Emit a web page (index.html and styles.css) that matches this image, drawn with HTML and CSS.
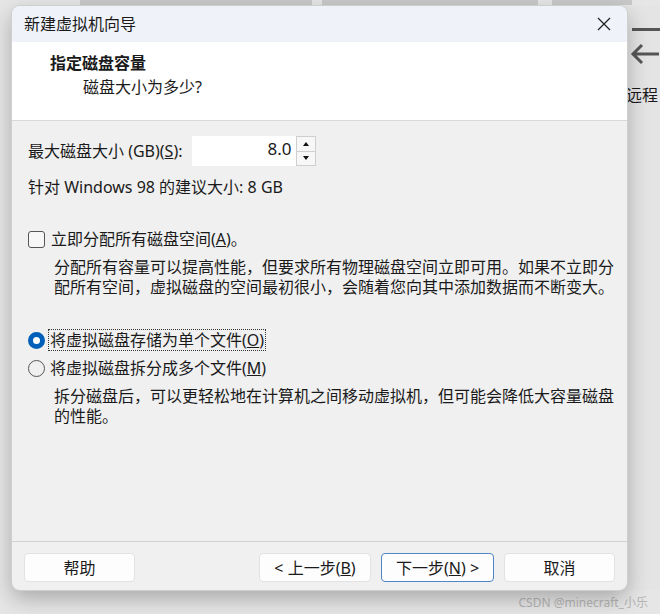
FILE: index.html
```html
<!DOCTYPE html>
<html lang="zh-CN">
<head>
  <meta charset="UTF-8">
  <title>新建虚拟机向导</title>
  <link rel="stylesheet" href="styles.css">
</head>
<body>

  <!-- windows behind the dialog -->
  <div class="top-strip">
    <span class="strip strip-a"></span>
    <span class="strip strip-b"></span>
    <span class="strip strip-c"></span>
  </div>

  <div class="stage">
    <div class="dialog">
      <div class="titlebar">
        <span>新建虚拟机向导</span>
        <svg class="close" width="14" height="14" viewBox="0 0 14 14">
          <path d="M1 1 L13 13 M13 1 L1 13" stroke="#222" stroke-width="1.3" fill="none"/>
        </svg>
      </div>

      <div class="header">
        <div class="header-title">指定磁盘容量</div>
        <div class="header-sub">磁盘大小为多少?</div>
      </div>

      <div class="content">
        <div class="size-row">
          <label>最大磁盘大小 (GB)(<u>S</u>):</label>
          <div class="spin">
            <div class="spin-value">8.0</div>
            <div class="spin-btns">
              <div class="spin-btn"><span class="tri-up"></span></div>
              <div class="spin-btn"><span class="tri-down"></span></div>
            </div>
          </div>
        </div>
        <div class="hint">针对 Windows 98 的建议大小: 8 GB</div>

        <div class="check-row">
          <span class="checkbox"></span>
          <span>立即分配所有磁盘空间(<u>A</u>)。</span>
        </div>
        <p class="desc">分配所有容量可以提高性能，但要求所有物理磁盘空间立即可用。如果不立即分配所有空间，虚拟磁盘的空间最初很小，会随着您向其中添加数据而不断变大。</p>

        <div class="radio-row first">
          <span class="radio checked"></span>
          <span class="focus">将虚拟磁盘存储为单个文件(<u>O</u>)</span>
        </div>
        <div class="radio-row">
          <span class="radio"></span>
          <span class="nofocus">将虚拟磁盘拆分成多个文件(<u>M</u>)</span>
        </div>
        <p class="desc desc-2">拆分磁盘后，可以更轻松地在计算机之间移动虚拟机，但可能会降低大容量磁盘的性能。</p>
      </div>

      <div class="footer">
        <button class="btn btn-help">帮助</button>
        <button class="btn btn-back">&lt; 上一步(<u>B</u>)</button>
        <button class="btn btn-next">下一步(<u>N</u>) &gt;</button>
        <button class="btn btn-cancel">取消</button>
      </div>
    </div>

    <div class="side">
      <span class="side-dash"></span>
      <svg class="side-arrow" width="30" height="22" viewBox="0 0 30 22">
        <path d="M29 11 H4 M12 2 L3 11 L12 20" stroke="#555" stroke-width="3" fill="none"/>
      </svg>
      <span class="side-text">远程</span>
    </div>
  </div>

  <div class="watermark">CSDN @minecraft_小乐</div>

</body>
</html>
```

FILE: styles.css
```css
body {
  margin: 0;
  width: 660px;
  height: 614px;
  overflow: hidden;
  background-color: #e6e6e6;
  font-family: "Noto Sans", "Noto Sans CJK SC", sans-serif;
  font-size: 16px;
  color: #1a1a1a;
  position: relative;
}

.top-strip {
  height: 6px;
  display: flex;
}

.strip {
  height: 5px;
  background-color: #c9c9c9;
}

.strip-a { margin-left: 80px; width: 232px; }
.strip-b { margin-left: 10px; width: 216px; }
.strip-c { margin-left: 14px; width: 80px; }

.stage {
  display: flex;
  padding-left: 12px;
}

.dialog {
  position: relative;
  z-index: 1;
  width: 616px;
  height: 584px;
  border-radius: 8px;
  overflow: hidden;
  background-color: #f0f0f0;
  box-shadow: 0 0 0 1px #cfcfcf, 0 8px 22px rgba(0, 0, 0, 0.28);
  display: flex;
  flex-direction: column;
}

.titlebar {
  height: 36px;
  flex-shrink: 0;
  background-color: #eff3f9;
  display: flex;
  align-items: center;
  justify-content: space-between;
  padding: 0 16px 0 12px;
  line-height: 20px;
}

.header {
  height: 79px;
  flex-shrink: 0;
  background-color: #fff;
  border-bottom: 1px solid #d9d9d9;
  padding: 11px 0 0 38px;
  box-sizing: border-box;
  line-height: 20px;
}

.header-title {
  font-weight: bold;
}

.header-sub {
  margin-top: 4px;
  padding-left: 33px;
}

.content {
  flex: 1;
  padding: 15px 0 0 16px;
  line-height: 20px;
}

.size-row {
  display: flex;
  align-items: center;
}

.spin {
  margin-left: 9px;
  display: flex;
  height: 30px;
}

.spin-value {
  width: 104px;
  background-color: #fff;
  text-align: right;
  padding-right: 4px;
  box-sizing: border-box;
  line-height: 26px;
  font-size: 17px;
}

.spin-btns {
  width: 20px;
  display: flex;
  flex-direction: column;
  border: 1px solid #cfcfcf;
  box-sizing: border-box;
}

.spin-btn {
  flex: 1;
  background-color: #f7f7f7;
  display: flex;
  align-items: center;
  justify-content: center;
}

.spin-btn + .spin-btn {
  border-top: 1px solid #cfcfcf;
}

.tri-up, .tri-down {
  width: 0;
  height: 0;
  border-left: 3px solid transparent;
  border-right: 3px solid transparent;
}

.tri-up { border-bottom: 4px solid #111; }
.tri-down { border-top: 4px solid #111; }

.hint {
  margin-top: 11px;
}

.check-row {
  margin-top: 32px;
  display: flex;
  align-items: center;
  gap: 6px;
}

.checkbox {
  width: 15px;
  height: 15px;
  border: 1px solid #555;
  border-radius: 3px;
  background-color: #f7f7f7;
}

.desc {
  margin: 8px 0 0 26px;
  width: 568px;
}

.radio-row {
  margin-top: 6px;
  display: flex;
  align-items: center;
  gap: 3px;
}

.radio-row.first {
  margin-top: 32px;
}

.radio {
  width: 15px;
  height: 15px;
  border: 1px solid #555;
  border-radius: 50%;
  box-sizing: content-box;
}

.radio.checked {
  width: 7px;
  height: 7px;
  border: 5px solid #005fb8;
  background-color: #fff;
}

.focus {
  border: 1px dotted #333;
  padding: 0 1px;
  line-height: 20px;
}

.nofocus {
  border: 1px solid transparent;
  padding: 0 1px;
}

.desc-2 {
  margin-top: 7px;
}

.footer {
  height: 49px;
  flex-shrink: 0;
  border-top: 1px solid #d2d2d2;
  box-sizing: border-box;
  display: flex;
  align-items: flex-start;
  padding: 11px 12px 0 12px;
}

.btn {
  height: 29px;
  background-color: #fdfdfd;
  border: 1px solid #e2e2e2;
  border-radius: 4px;
  font-family: "Noto Sans", "Noto Sans CJK SC", sans-serif;
  font-size: 16px;
  color: #1a1a1a;
  padding: 0;
  line-height: 20px;
}

.btn-help { width: 111px; }
.btn-back { width: 112px; margin-left: auto; }
.btn-next { width: 113px; margin-left: 10px; border-color: #4f86c6; }
.btn-cancel { width: 111px; margin-left: 10px; }

.side {
  flex: 1;
  display: flex;
  flex-direction: column;
  padding-top: 22px;
  background-color: #e4e4e4;
}

.side-dash {
  margin-left: 5px;
  height: 3px;
  background-color: #555;
}

.side-arrow {
  margin: 12px 0 0 3px;
}

.side-text {
  margin: 20px 0 0 -1px;
  white-space: nowrap;
  line-height: 20px;
}

.watermark {
  position: absolute;
  right: 12px;
  bottom: 3px;
  font-size: 12px;
  color: #b5b5b5;
  line-height: 16px;
}
```
